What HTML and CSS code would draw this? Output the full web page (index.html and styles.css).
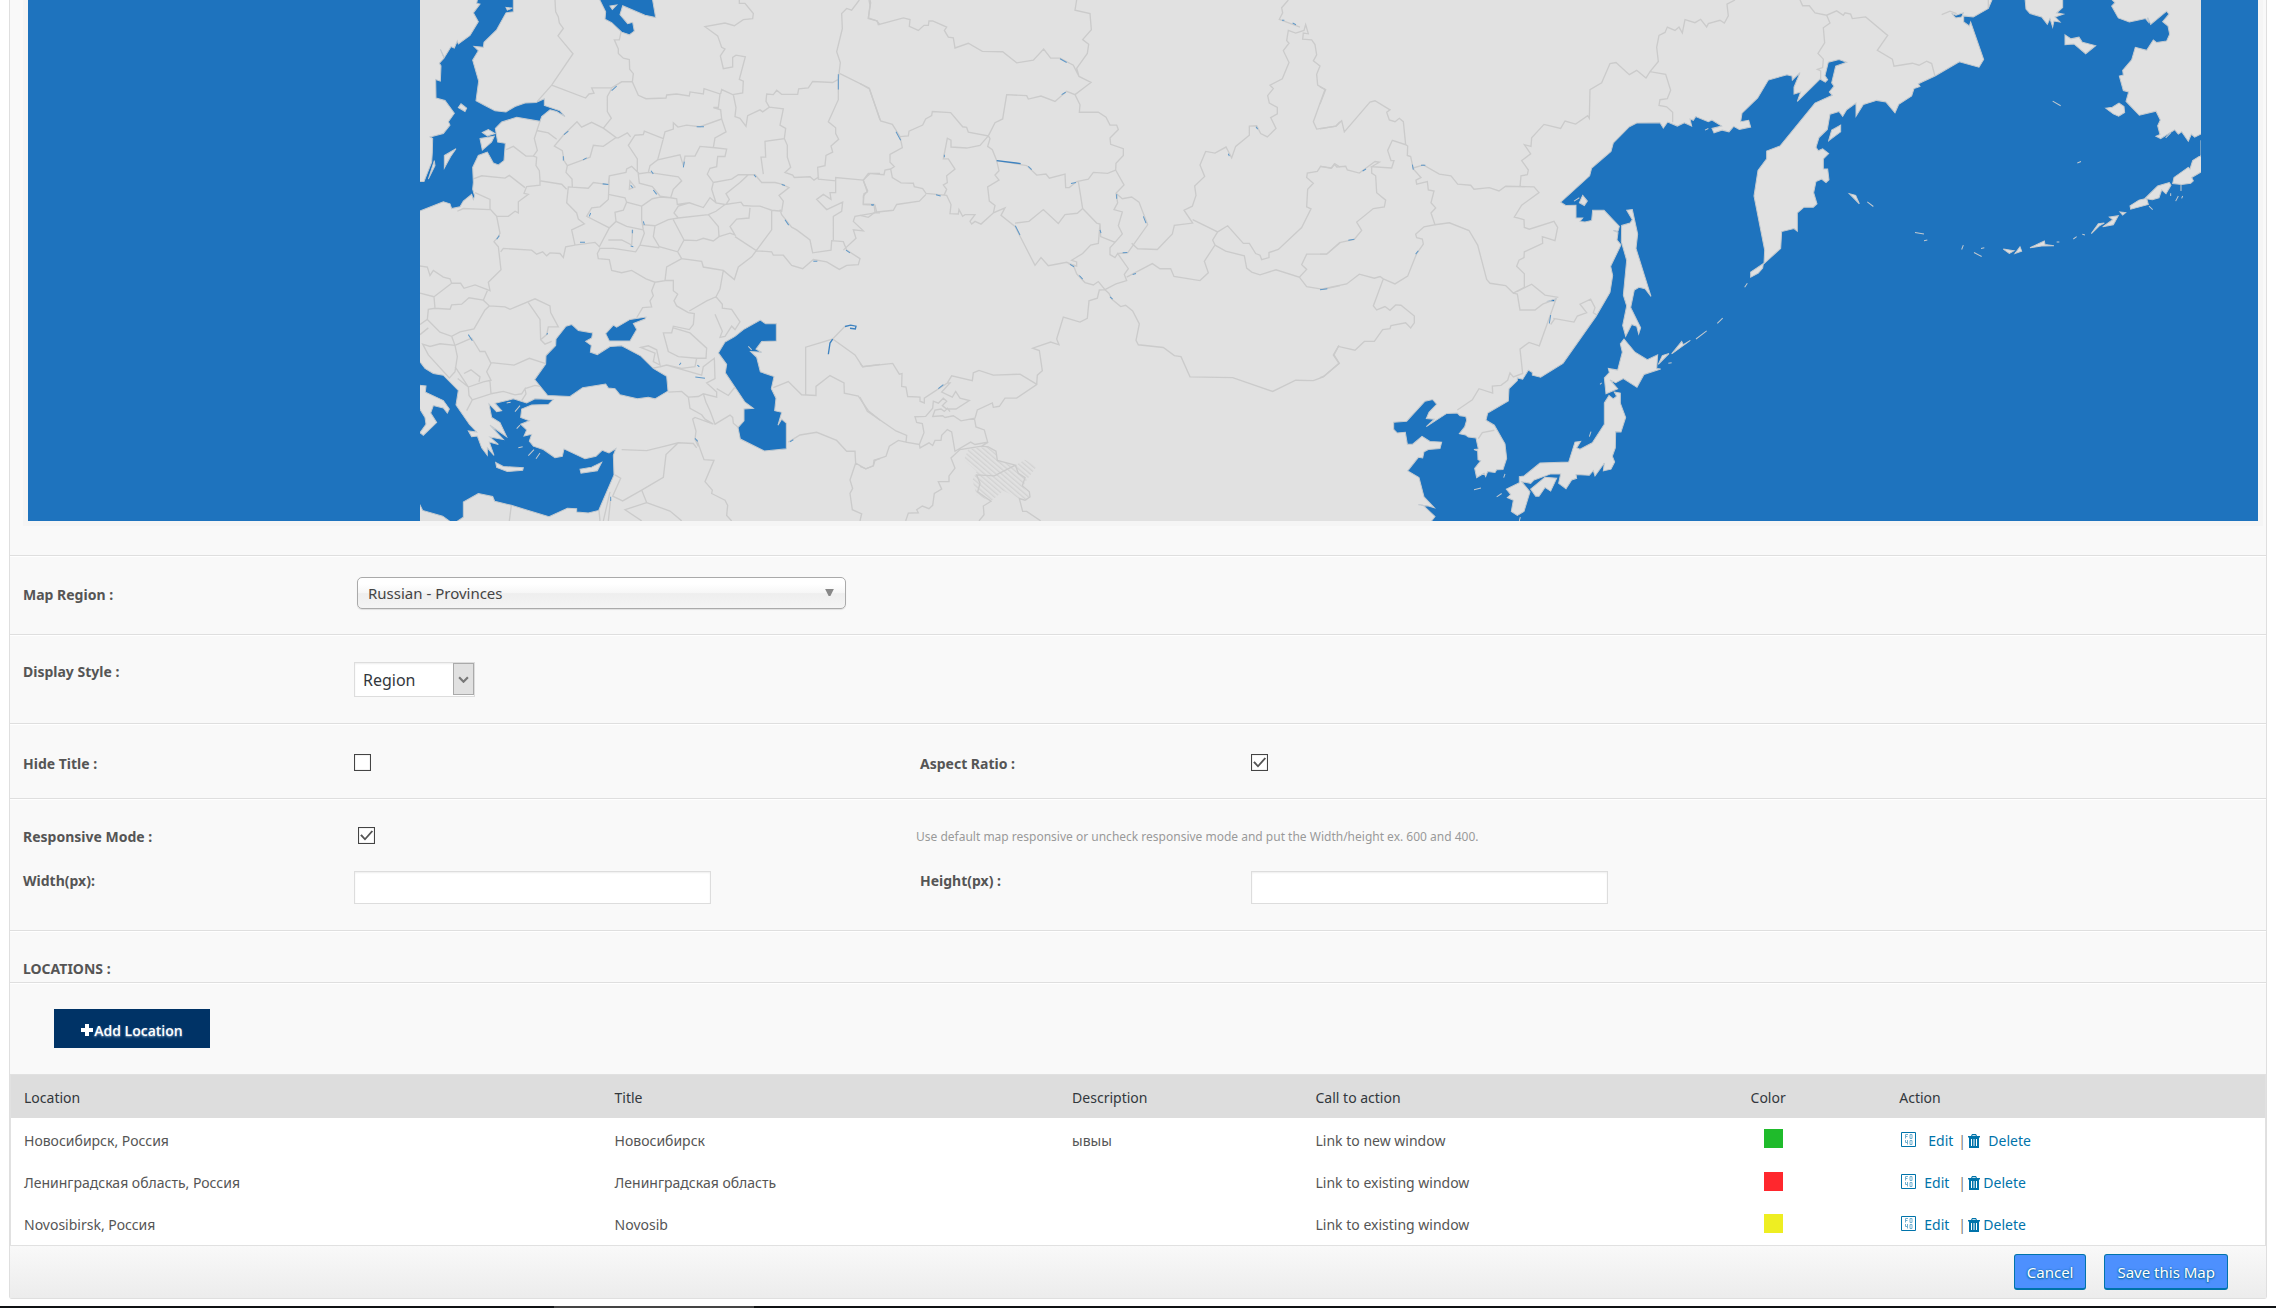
FILE: index.html
```html
<!DOCTYPE html>
<html lang="en">
<head>
<meta charset="utf-8">
<title>Edit Map</title>
<link rel="stylesheet" href="styles.css">
</head>
<body>
<main class="panel">
  <div class="map-frame">
    <svg class="map" viewBox="28 0 2230 521" role="img" aria-label="Map preview">
      <defs>
        <pattern id="hatch" width="11" height="11" patternUnits="userSpaceOnUse" patternTransform="rotate(-50)"><path class="hatch-line" d="M2 0V11"/></pattern>
      </defs>
      <rect class="sea" x="28" y="0" width="2230" height="521"/>
      <rect class="ground" x="420" y="0" width="1781" height="521"/>
      <g transform="translate(400 0) scale(.33333 .33801)">
        <path class="line" d="M465 0L467 35 475 50 478 68 490 84 474 106 519 159 455 252 412 300M455 252L557 290 567 278 582 276 575 260 635 260 665 242 697 242M635 262L622 285 622 330 634 350 610 379 575 362 545 376 531 360 492 398 463 432 487 446 492 475 502 490 498 510 516 530 517 553M663 95L658 118 643 118 655 145 655 158 670 172 688 176 689 205 700 218 697 242 715 282 738 292 798 290 800 281 830 278 868 284 870 272 910 278 912 262 960 278 955 318 940 318 962 325 965 352 900 375 860 370 834 376 820 363 820 382 795 390 790 410 733 388 730 398 705 400 685 430 712 470 712 508M502 490L549 473 570 465 580 430 610 433 648 407 610 379M648 407L655 408 682 393 692 405M790 410L773 473 750 490 745 510 718 514 695 492 680 500 678 510 628 520 625 546 580 540 565 557 505 553 500 600 530 630 535 648 553 662 515 680 525 725 585 717 598 730 628 674M773 473L840 458 850 490 855 462 885 462 900 433 945 437 980 441 975 463 953 463 950 493 930 498 922 515 940 540 995 530 1015 517 1045 517M745 510L835 523 845 535 820 560 812 585 780 580 757 552 718 542 714 508M965 352L978 390 945 408 940 437M962 278L965 265 998 280 1028 275 1030 240 1018 235 1036 168 1008 163 998 170 998 198 970 203 961 165 975 145 965 140 953 106 915 79 975 68 1003 76 1030 58 1058 55 1060 40 1035 10 1018 10 1018 0M1000 280L1008 318 1005 345 1020 350 1038 374 1043 342 1080 325 1088 331 1108 317 1150 322 1140 370 1157 380 1153 410 1095 418 1097 465 1083 465 1090 515M1108 317L1098 300 1100 278 1120 280 1130 267 1145 279 1193 279 1196 263 1225 260 1238 241 1298 244 1315 235 1315 295 1285 360 1307 378 1307 395 1316 412 1293 432 1298 450 1278 460 1275 490 1253 495 1255 530 1307 535 1307 525 1390 533 1410 513 1440 513M1315 235L1321 185 1310 153 1327 85 1325 40 1340 25 1355 30 1378 0M1320 218L1408 261 1440 355M1407 0L1410 15 1405 55 1430 62 1440 73M1153 410L1162 430 1162 465 1172 495 1155 510 1178 518 1183 525 1230 523 1242 533 1257 523M940 540L935 560 948 600 975 605 1023 598 1030 608 1058 610 1080 610 1115 622 1145 625 1150 595 1137 578 1167 555 1145 545 1125 540 1085 540 1065 517 1045 517 1020 540 978 573 988 590 978 605M948 600L930 585 910 614 868 600 832 605 830 588 812 585 780 583 757 588 725 610 725 650 730 680M868 600L835 610 822 630 835 645 925 635 948 625 975 605M725 610L680 598 675 585 625 575M690 535L688 560 705 553ZM725 650L730 680 680 670 648 655 628 674 560 640 575 615 600 612 625 590 628 520M648 655L645 628 670 622 680 598M730 665L765 668 805 650 835 645M765 668L760 700 778 730 833 745 852 710 820 650M852 710L890 712 910 705 940 713 957 700 955 670 925 635M957 700L990 690 1005 695 990 670 1010 648 1047 645 1050 615M730 680L733 690 720 725 707 745 640 735 600 735 592 750 595 765 628 768 635 800 665 807 695 800 738 825 765 835 795 830 800 790 845 765M720 725L778 733M698 680L695 725 665 710 625 710M833 745L845 765 905 773 910 790 940 795 970 800 1003 827 1015 790 1055 760 1115 680 1115 622M1005 700L1070 742 1115 745 1120 755 1150 755 1175 785 1208 795 1240 768 1280 775 1318 797 1340 785 1375 783 1380 765 1340 740 1330 715 1295 712 1293 740 1238 748 1230 710 1190 680 1175 672 1145 635 1140 620M1300 710L1300 640 1325 625 1328 598 1280 620 1250 590 1270 575 1293 590 1290 570 1307 570 1307 530M1330 740L1368 705 1360 680 1390 683 1360 655 1365 640 1425 630 1440 630M1390 535L1403 565 1390 580 1390 605 1425 607 1430 628M795 830L820 830 820 860 833 870 822 890 830 905 865 925 883 928 880 960 868 975 820 965 815 985 790 985 805 1040 835 1055 890 1060M970 800L960 855 948 878 920 890 868 920M948 878L967 900 967 912 995 915 1020 952 1005 975 995 965 975 995 960 998 967 980 945 930M765 835L755 860 760 875 750 890 755 908 728 910 710 940M820 970L870 985 920 1030 918 1060 890 1060 885 1085 845 1090 800 1080 780 1085 755 1090M302 745L310 735 395 740 410 752 428 745 440 757 450 748 480 750 490 762 497 730 525 725M295 700L300 690 290 640 325 640 345 625 355 630 355 597 385 575 372 572 380 552 420 548 420 535 485 545 500 560M218 530L245 520 315 527 328 519 375 555M420 533L418 505 408 490 410 465 400 462 378 462 340 433 318 443M400 462L412 445 403 410 420 358M410 386L445 393 470 412M225 570L270 590 270 618 290 640M172 625L190 617 270 620M295 700L282 715 295 730 303 798 265 835 270 860 225 843 192 853 182 838 155 838 150 825 130 820 100 800 90 815 82 790 60 787M155 838L102 878 105 912 150 915 155 902 185 900 207 881 250 888 268 905 315 908 330 915 405 884 450 905 452 925 475 967 445 967 440 990 422 1005 435 1018 455 1010M60 867L102 878M250 888L262 860M105 912L85 915 82 945 60 960M82 945L120 983 155 995 180 982 222 973 255 917 268 905M385 895L420 945 422 1005M60 990L85 970M68 1018L90 1025 120 1017 165 1022 172 1055 165 1100 148 1118 85 1050ZM155 995L165 1022 215 1000 240 1040 255 1040 273 1075 260 1100 273 1125 250 1130 205 1145 192 1125 165 1085M192 1105L213 1094 240 1115 237 1130M173 1120L205 1145 207 1170 217 1183 200 1215M217 1183L273 1165 270 1128M273 1073L342 1080 388 1060 435 1075M273 1165L310 1158 345 1168 365 1165 375 1150 378 1165 365 1185M375 1150L405 1140 420 1143M722 1028L745 1023 770 1035 780 1080 760 1070 765 1045ZM805 1160L845 1158 865 1175 870 1208 905 1227 915 1240 940 1255 885 1235 878 1240 888 1275 885 1300 895 1320M865 1175L895 1173 910 1165 950 1175 950 1160 920 1133 945 1120 943 1060 910 1085 905 1110 800 1080M950 1150L985 1170 1005 1145M910 1165L918 1190 930 1215 945 1255 990 1228 998 1235 1000 1252 1015 1265M665 1330L740 1333 795 1320 835 1310 880 1312 890 1325M835 1310L798 1345 790 1412 725 1450 668 1482 638 1468 662 1415 645 1405M725 1450L740 1487 675 1508 725 1541M740 1487L810 1512 845 1541M890 1300L912 1360 942 1362 915 1425 937 1450 935 1460 975 1480 983 1495 980 1525 995 1541M1120 1147L1165 1129 1205 1168 1248 1170 1248 1143 1290 1111 1332 1133 1333 1163 1375 1172 1405 1215 1440 1243M1217 1168L1217 1027 1298 1003 1365 1050 1388 1085 1440 1078M1335 965L1298 1003M1165 1308L1200 1287 1250 1279 1310 1303 1340 1335 1365 1335 1367 1370 1350 1420 1358 1445 1350 1460 1357 1508 1385 1520 1380 1541M1367 1370L1397 1387 1420 1378 1425 1362 1440 1357M328 1541L334 1495M600 1541L597 1510M610 1541L630 1455M625 1541L632 1475"/>
        <path class="sea coast" d="M233 -5L230 10 240 12 220 38 235 64 210 105 175 130 172 121 163 142 153 138 133 170 121 146 132 172 118 187 123 195 121 240 107 235 108 290 135 297 163 335 145 360 150 370 130 395 90 405 98 410 97 450 95 480 72 537 58 537 58 625 130 597 150 603 155 617 180 612 190 595 215 575 220 590 224 580 218 560 220 540 218 495 235 460 262 450 280 482 295 488 312 475 316 424 293 420 286 380 305 361 350 347 420 359 425 345 450 325 470 330 495 345 480 328 433 312 433 292 408 303 375 305 345 315 318 331 285 328 255 312 228 298 236 240 218 178 235 150 222 137 250 140 252 125 290 88 318 38 340 35 340 -5Z"/>
        <path class="sea coast" d="M597 -5L617 35 615 57 635 67 665 95 688 103 703 92 698 66 683 70 660 43 668 17 735 45 767 52 757 -5ZM515 960L535 978 578 985 575 1000 557 1010 574 1022 571 1042 592 1049 630 1025 665 1023 722 1053 760 1090 800 1113 804 1157 765 1180 745 1175 712 1180 660 1168 645 1150 625 1148 617 1136 548 1147 510 1173 443 1170 404 1123 437 1077 438 1052 467 1022 468 1003 498 965ZM617 987L640 962 650 968 690 945 738 938 735 944 700 957 710 975 690 1009 628 1009ZM1081 947L1097 958 1129 958 1129 1009 1085 1010 1068 1033 1085 1042 1052 1040 1070 1057 1081 1100 1122 1114 1114 1150 1128 1178 1124 1215 1145 1220 1134 1258 1145 1240 1159 1252 1159 1328 1093 1334 1021 1299 1014 1265 1032 1245 1032 1210 1060 1208 1035 1190 976 1103 980 1078 955 1044 975 1012 1005 995 1030 975Z"/>
        <path class="sea coast" d="M58 1068L75 1090 100 1105 130 1110 175 1155 168 1198 208 1255 230 1278 205 1275 215 1292 232 1290 245 1325 262 1347 262 1325 282 1347 268 1308 295 1315 270 1293 310 1300 270 1258 320 1292 300 1250 275 1235 267 1195 290 1218 305 1215 285 1193 340 1180 380 1192 405 1180 460 1182 445 1197 395 1198 365 1210 362 1235 388 1245 362 1255 380 1272 372 1290 395 1285 388 1305 400 1320 430 1330 465 1354 487 1350 492 1328 555 1357 588 1350 607 1332 627 1340 648 1327 640 1347 642 1405 596 1510 565 1518 530 1515 530 1505 502 1504 447 1529 334 1495 284 1483 278 1469 235 1460 190 1485 190 1530 160 1550 128 1527 68 1510 58 1490Z"/>
        <path class="ground coast" d="M58 1140L78 1142 76 1160 130 1185 148 1210 142 1222 130 1207 100 1200 92 1222 110 1250 70 1288 60 1280 78 1255 75 1235 58 1208ZM287 1368L310 1380 370 1384 368 1391 322 1395 290 1383ZM540 1388L575 1382 605 1368 592 1393 543 1400ZM240 410L283 403 275 420 247 444ZM133 460L168 440 152 463 133 497ZM103 475L105 490 85 530ZM247 392L265 383 285 395 262 402ZM175 318L183 307 200 320 195 330ZM318 22L337 24 322 30ZM630 18L650 15 637 28ZM355 1325L368 1322M385 1348L402 1330M360 1258L350 1268M408 1357L420 1340M345 1218L360 1200M320 1192L332 1190M1045 1025L1055 1035"/>
        <path class="lake" d="M1285 1048L1290 1015 1298 1003M1335 966L1352 962 1368 965 1366 973 1350 971"/>
        <path class="river" d="M1315 220V265M635 268L650 255M492 398L505 388M890 375H912M490 462V475M549 473L560 467M850 495L853 478M753 505L760 515M625 546L608 544M760 562L770 575M692 548L698 555M568 640L572 630M290 708L298 697M540 717H555M697 680V690M692 728L700 730M1062 517L1068 524M1145 546L1155 549M1415 607H1422M1338 740L1350 748M1240 773H1252M1155 650L1166 666M886 1115L915 1119M838 1080L843 1073M892 1080L898 1085M443 985L440 990M885 1297L893 1306M1170 1307L1180 1301M632 1470V1482M205 990L217 1008M730 655L733 665"/>
      </g>
      <g transform="translate(860 0) scale(.33333 .33801)">
        <path class="hatched" d="M312 1360L325 1328 385 1322 408 1335 412 1362 466 1376 495 1360 530 1380 500 1420 488 1440 512 1470 500 1480 478 1475 430 1452 393 1483 350 1465 337 1420 350 1395Z"/>
        <path class="line" d="M30 0L32 8 25 53 52 62 55 73 130 53 150 58 148 78 175 90 192 75 205 75 207 62 218 62 260 80 253 90 265 110 280 112 285 142 325 128 367 152 428 153 470 186 520 178 551 145 572 172 600 172 640 193 657 226 693 244 645 280 620 270 585 300 543 284 505 293 500 283 440 280 428 352 405 363 385 402 325 391 320 377 308 375 272 333 217 330 215 342 197 352 188 370 147 388 145 402 120 404 97 368 62 358 28 263 0 247M650 0L645 30 690 40 694 88 668 117 686 131 682 158 650 202 657 226M645 280L660 310 658 332 715 332 738 347 750 370 770 370 775 383 750 408 752 427 790 440 790 460 768 483 767 503 743 513 700 510 685 530 650 537 628 555 617 555 615 515 568 527 558 515 530 518 500 490 410 475 417 505 405 518 417 533 383 553 388 595 405 608 400 630 363 663 345 655 335 663 330 655 345 635 315 635 308 640 297 620 295 633 270 632 273 605 260 578 198 572 188 558 163 552 160 542 123 541 97 525 92 500 103 493 90 480 90 457 127 437 120 404M385 402L360 430 320 438 273 435 273 415 262 409 250 470 265 470 285 500 260 520 262 540 250 547 260 560 252 578M385 402L390 410 383 433 397 443 410 475M198 575L178 595 110 605 100 622 45 628 25 643 0 637M45 628L42 605 10 603 12 573 22 568 10 533 25 513 72 517 75 503 92 500M400 630L435 615 423 637 465 670 525 785 543 762 565 786 620 776 640 785 650 810 675 836 700 843 715 833 735 857 718 858 712 882 687 890 682 942 660 953 610 938 590 1003 597 1020 572 1012 518 1030 538 1037 547 1097 532 1110 530 1138 470 1178 435 1178 418 1202 400 1205 397 1192 352 1213 345 1237 303 1245 280 1230 255 1235 248 1230 218 1232 225 1213 243 1210 253 1217 262 1208 270 1218M465 660L507 655 550 620 595 661 615 635 652 631 668 617 655 537M668 617L710 660 720 663 722 700 765 717 750 733 750 753 765 762 773 750 805 795 793 812 800 830 768 840 735 857M720 663L715 720 692 725 668 750 635 770 650 775 650 787 625 780M767 503L792 547 768 572 773 600 762 620 787 627 775 668 787 692 765 717M768 572L787 588 815 583 837 598 863 665 803 748 773 750M815 720L833 736 892 738 937 692 943 667 998 660 972 622 997 610 1008 578 1004 550 1034 522 1020 488 1037 448 1065 453 1098 435 1115 467 1127 433 1168 400 1168 373 1190 372 1202 395 1222 405 1248 380 1232 348 1252 337 1252 318 1228 305 1223 283 1240 262 1230 252 1267 233 1287 185 1270 150 1287 128 1280 120 1285 90 1307 98 1332 90 1337 73 1345 100 1330 98 1328 116 1355 118 1365 132 1370 162 1360 180 1380 195 1370 220 1373 252 1395 265 1360 360 1370 382 1428 373 1440 360M1285 0L1265 23 1268 38 1258 57 1320 80M998 650L1073 686 1103 668 1150 720 1168 720 1187 750 1200 755 1205 768 1227 762 1227 747 1255 738 1325 673 1353 618 1340 612 1343 560 1360 542 1340 525 1342 512 1372 507 1382 492 1413 498 1425 485 1440 494M1073 686L1058 710 1065 725 1033 773 1045 807 1020 830 942 818 932 795 900 795 877 780 800 820M1065 725L1097 743 1153 757 1160 793 1175 805 1200 813 1248 798 1318 820 1340 797 1325 783 1340 752 1400 752 1440 717M1318 820L1340 848 1390 856 1440 845M735 857L747 868 755 885 782 907 797 903 818 920 838 958 828 1007 835 1020 910 1028 943 1052 963 1055 990 1115 1118 1117 1238 1158 1307 1125 1360 1126 1390 1115 1437 1075 1420 1050 1437 1022M0 1075L8 1085 98 1075 118 1107 126 1105 125 1143 138 1145 143 1173 180 1175 180 1187 193 1192 193 1178 262 1133 275 1112 337 1126 340 1103 357 1096 400 1110 480 1107 532 1138M262 1133L270 1133 245 1160 277 1175 287 1158 300 1178 328 1185 288 1210 260 1210 247 1200 260 1187 250 1178 235 1193 220 1187 218 1208 197 1232 165 1233 170 1250 187 1253 192 1280 178 1315 138 1308 140 1288 108 1275 22 1217 0 1175M0 1380L18 1387 40 1378 42 1362 78 1350 88 1320 115 1303 138 1308M178 1315L180 1325 207 1310 218 1318 225 1303 243 1303 245 1288 262 1271 275 1278 285 1335 332 1308 345 1315 383 1308 373 1272 348 1263 343 1237M385 1308L365 1320 300 1330 273 1355 285 1385 267 1408 267 1425 235 1425 245 1447 223 1460 218 1495 207 1505 187 1497 170 1508 175 1517 145 1518 137 1541M365 1320L385 1322 408 1335 412 1362 466 1376 403 1408 350 1405 360 1430 353 1455 393 1483 370 1497 372 1523 357 1541M466 1376L475 1400 495 1413 487 1437 508 1455 510 1470 495 1480 478 1475 488 1513 500 1513 542 1541"/>
        <path class="lake" d="M410 475L482 484"/>
        <path class="river" d="M600 174L620 185M108 390L122 415M228 576L242 580M633 543L648 540M466 668L480 695M720 680L723 690M630 782L642 789M658 815L668 826M788 748L802 747M818 812L828 809M1188 375L1193 382M1105 455L1108 462M770 575V588M850 640L858 660M605 280L617 273M33 606H42M253 458V465M235 1150L250 1138M750 878L758 885M1266 60H1273M1298 68L1308 73M505 492L515 502"/>
      </g>
      <g transform="translate(1320 0) scale(.33333 .33801)">
        <path class="line" d="M0 257L17 265 0 308M0 381L48 373 65 357 73 390 150 302 165 298 210 325 200 332 208 355 225 360 238 350 250 360 257 428 217 415 203 445 213 475 222 475 215 497 155 493 178 480 165 478 118 512 82 503 77 492 50 494 43 485 35 497 0 492M155 493L155 512 167 520 170 570 197 592 193 612 160 617 110 657 125 682 103 708 62 717 20 752 0 752M257 428L263 432 262 460 272 463 280 500 303 525 288 533 290 545 322 537 325 562 342 565 333 600 347 615 333 630 345 665 312 671 287 693 290 703 307 707 310 722 290 750 263 817 225 840 190 825 160 905 170 917 195 907 210 918 227 902 243 903 283 935 283 955 272 970 257 955 213 963 210 972 188 975 163 1010 133 1010 105 1036 55 1025 42 1050 58 1075 12 1113 0 1117M0 856L80 840 118 811 163 823 180 818 190 825M280 497L310 488 358 515 393 520 413 545 452 548 462 560 508 555 537 565 557 551 642 553 657 570 605 607 583 642 612 650 613 673 628 678 702 655 713 673 705 712 667 700 668 720 613 745 612 762 597 770 590 788 613 810 613 850 580 867 557 845 510 838 500 827 473 725 447 682 388 659 345 665M600 553L603 520 622 517 625 503 605 475 632 455 613 428 633 433 635 408 672 368 722 380 735 358 767 367 803 342 808 350 810 265 845 245 870 188 888 185 928 221 950 208 978 231 990 212 1037 220 1052 267 1042 292 1020 295 1017 312 1040 316 1058 332 1058 362M990 212L1015 182 1010 140 1017 105 1035 96 1042 80 1065 90 1077 80 1087 97 1095 58 1125 67 1142 57 1160 80 1165 70 1200 60 1213 68 1225 47 1221 12 1245 0M580 867L592 870 600 917 645 917 668 900 708 885 658 1023 627 1013 600 1033 608 1105 580 1115 570 1103 563 1125 543 1140 517 1142 518 1163 477 1150 457 1183 412 1213M592 862L635 841 675 873 715 880M700 942L762 953 772 935 800 925 780 900 812 885 825 910 820 925 830 932M692 960L705 942M475 1298L487 1280 523 1273M1440 0L1448 17 1468 17 1485 38 1520 45 1550 32 1570 45 1575 38 1592 42 1597 55 1637 50 1703 105 1672 149 1717 175 1722 196 1777 187 1797 193 1820 181 1835 188 1845 225M1520 45L1530 68 1510 82 1514 127 1494 158 1510 175 1508 200 1492 205 1502 210V235M2005 -3V25M1865 43L1890 33 1910 40"/>
        <path class="sea coast" d="M320 1560L345 1528 308 1494 295 1493 325 1497 343 1502 312 1470 297 1413 263 1393 295 1353 308 1355 312 1337 325 1330 360 1327 365 1308 330 1306 306 1291 278 1314 262 1314 256 1279 232 1281 221 1270 221 1249 260 1246 315 1187 338 1182 350 1196 327 1220 319 1238 343 1240 319 1262 380 1223 412 1222 420 1230 437 1232 440 1243 434 1263 418 1283 437 1287 445 1293 468 1296 475 1328 462 1330 473 1334 474 1360 482 1363 464 1386 470 1413 492 1400 497 1410 503 1395 525 1398 530 1390 549 1389 560 1356 555 1313 523 1258 498 1243 503 1222 565 1186 567 1150 592 1126 592 1118 608 1122 625 1095 637 1102 637 1110 662 1116 729 1075 828 936 870 865 878 815 872 788 903 724 891 710 894 688 880 682 894 684 898 670 852 622 818 622 815 652 795 657 780 655 788 645 768 645 768 607 737 608 722 598 809 520 815 497 873 448 880 423 928 375 950 364 1020 363 1030 379 1043 361 1072 373 1093 363 1115 373 1110 352 1120 356 1127 345 1165 360 1176 355 1205 373 1176 380 1182 393 1207 385 1227 390 1241 374 1258 383 1292 376 1286 356 1262 360 1266 335 1313 290 1345 237 1401 221 1416 225 1417 237 1440 215 1422 258 1422 278 1442 272 1432 300 1500 234 1516 243 1523 236 1515 224 1525 184 1557 176 1580 184 1547 196 1535 245 1542 255 1528 272 1537 282 1485 305 1380 432 1340 447 1340 470 1314 504 1302 580 1334 740 1332 780 1382 735 1385 685 1422 676 1432 684 1432 630 1452 613 1480 613 1491 603 1481 570 1488 537 1505 530 1518 540 1527 532 1523 500 1510 500 1510 470 1526 454 1508 440 1495 446 1488 436 1497 407 1522 383 1530 338 1557 330 1568 344 1580 325 1608 305 1608 344 1630 309 1670 297 1698 302 1725 334 1736 309 1775 284 1782 262 1800 256 1795 248 1845 225 1918 183 1977 199 1991 176 1952 65 1948 77 1931 65 1931 47 1960 50 2005 25 2018 -5 2115 -5 2118 27 2130 40 2165 50 2182 72 2190 55 2198 80 2202 62 2220 65 2205 50 2230 42 2210 38 2228 22 2228 -5 2372 -5 2385 8 2375 18 2395 53 2428 65 2477 55 2485 65 2483 52 2492 72 2540 33 2547 42 2528 64 2544 77 2549 101 2540 121 2510 126 2500 118 2480 149 2446 140 2435 177 2408 208 2410 222 2398 225 2410 268 2426 272 2418 300 2458 341 2508 329 2521 355 2513 372 2520 398 2508 403 2522 410 2564 384 2575 397 2585 390 2605 418 2614 397 2624 406 2650 393 2650 1560ZM1895 40L1908 45 1930 38 1925 50 1907 53ZM680 892L708 884 703 891Z"/>
        <path class="ground coast" d="M920 622L937 620 953 692 948 735 993 877 975 854 957 850 943 858 932 910 962 970 956 988 950 965 935 960 917 995 908 963 920 905 910 873 920 770 904 715 905 667 930 660 937 650ZM912 1003L945 1042 982 1064 1013 1050 1010 1090 1022 1092 972 1108 951 1146 910 1120 887 1132 870 1124 893 1150 858 1165 853 1118 868 1102 865 1090 893 1095 907 1042 901 1017ZM883 1160L901 1163 901 1193 917 1235 903 1278 887 1277 886 1325 877 1350 884 1367 873 1388 850 1393 853 1370 825 1408 820 1392 808 1406 768 1404 770 1415 755 1420 738 1446 716 1430 722 1402 692 1402 642 1420 632 1430 605 1425 630 1455 612 1513 592 1525 574 1513 580 1480 562 1472 572 1463 559 1447 598 1428 598 1410 612 1408 660 1370 746 1367 765 1308 782 1306 770 1325 780 1329 817 1310 853 1255 853 1192 867 1170 880 1180 890 1172ZM632 1447L675 1412 710 1415 692 1453 675 1442 657 1468 647 1468ZM1292 805L1330 780 1328 793 1315 808 1292 820ZM1055 1047L1085 1010 1090 1020 1111 1007ZM1015 1078L1027 1052 1047 1046ZM788 578L802 595 793 608 778 600ZM1128 1003L1160 979M1192 957L1208 941M1274 850L1282 838M1045 1075L1055 1073M840 1137L845 1133M808 1292L813 1277M462 1449L483 1444M530 1470L545 1460M551 1413L555 1402M598 1541L601 1530M762 595L778 585M1155 385L1165 380M1526 416L1535 385 1562 370V390ZM2235 103L2253 115 2277 110 2287 125 2327 135 2297 159 2262 130 2235 132ZM2357 320L2377 317 2397 305 2412 315 2414 333 2396 344 2380 337ZM1588 573L1607 578 1618 603ZM1642 597L1660 611M2198 299L2222 313M1785 688L1812 692M1812 712L1822 710M1925 738L1930 725M1962 747L1985 759M1983 735L1993 733M2050 737L2082 742 2068 750ZM2085 750L2100 730 2105 743ZM2130 733L2173 713 2175 723 2202 727 2165 728ZM2210 716H2218M2260 707L2270 700M2287 693L2295 695M2272 482L2283 478M2314 691L2335 662 2353 660 2338 668ZM2348 671L2378 650 2368 642 2395 638 2380 665ZM2400 627L2417 629 2408 636ZM2430 609L2457 592 2480 587 2485 605 2432 619ZM2475 587L2513 550 2548 540 2553 548 2538 573 2525 562 2517 585 2497 591ZM2558 543L2562 525 2605 495 2610 500 2618 475 2650 455 2650 505 2615 525 2620 535 2612 542 2585 546ZM2583 546V565M2487 610L2498 620M2552 572V580M2567 595L2575 580M2585 587L2588 580M2537 408L2552 393M2643 415V465"/>
        <path class="river" d="M128 506L138 500M85 711L103 708M277 487L280 502M303 489H316M287 752L295 742M0 857L22 854M688 957L692 932"/>
      </g>
      <rect class="sea" x="2201" y="0" width="57" height="521"/>
      <rect class="sea" x="28" y="0" width="392" height="521"/>
    </svg>
  </div>

  <form>
    <section class="row row-region">
      <label class="name" for="region">Map Region :</label>
      <div class="pick"><select id="region" class="chosen"><option>Russian - Provinces</option></select><svg class="pick-arrow" viewBox="0 0 10 8" aria-hidden="true"><path d="M0 0H10L6 8H4Z"/></svg></div>
    </section>
    <section class="row row-style">
      <label class="name" for="style">Display Style :</label>
      <div class="drop"><select id="style" class="plain"><option>Region</option></select><span class="drop-arrow"><svg viewBox="0 0 10 6" aria-hidden="true"><path d="M1 1L5 5L9 1"/></svg></span></div>
    </section>
    <section class="row row-title">
      <label class="name" for="hide">Hide Title :</label>
      <div class="field"><input type="checkbox" id="hide" class="tick"></div>
      <label class="name" for="aspect">Aspect Ratio :</label>
      <div class="field"><input type="checkbox" id="aspect" class="tick" checked></div>
    </section>
    <section class="row row-size">
      <label class="name" for="responsive">Responsive Mode :</label>
      <div class="field field-inset"><input type="checkbox" id="responsive" class="tick" checked></div>
      <p class="hint">Use default map responsive or uncheck responsive mode and put the Width/height ex. 600 and 400.</p>
      <label class="name" for="width">Width(px):</label>
      <input type="text" id="width" class="box">
      <label class="name" for="height">Height(px) :</label>
      <input type="text" id="height" class="box">
    </section>
    <section class="row row-heading"><h2 class="name">LOCATIONS :</h2></section>
    <section class="row row-add">
      <button type="button" class="add"><svg viewBox="0 0 12 12" aria-hidden="true"><path d="M4 0H8V4H12V8H8V12H4V8H0V4H4Z"/></svg>Add Location</button>
    </section>

    <table class="locations">
      <colgroup><col class="c-location"><col class="c-title"><col class="c-description"><col class="c-call"><col class="c-color"><col></colgroup>
      <thead><tr><th>Location</th><th>Title</th><th>Description</th><th>Call to action</th><th>Color</th><th>Action</th></tr></thead>
      <tbody>
        <tr><td>Новосибирск, Россия</td><td>Новосибирск</td><td>ывыы</td><td>Link to new window</td><td><span class="swatch green"></span></td>
          <td><div class="actions spaced"><a href="#"><svg class="code" viewBox="0 0 15 15" aria-hidden="true"><path d="M.5.5H14.5V14.5H.5Z"/><path class="thin" d="M4.500 6.500V2.500H7M4.500 4.500H6.500M9 2.500H11V6.500H9ZM4.500 8V10.500H7M6.500 8V12.500M9 8.500H11V12.500H9Z"/></svg>Edit</a><span class="bar">|</span><a href="#"><svg class="bin" viewBox="0 0 12 14" aria-hidden="true"><path d="M4 0H8L9 2H12V3.500H11V14H1V3.500H0V2H3ZM4.500 1.200L4.200 2H7.800L7.500 1.200Z"/><path class="slots" d="M3.500 5V12M6 5V12M8.500 5V12"/></svg>Delete</a></div></td></tr>
        <tr><td>Ленинградская область, Россия</td><td>Ленинградская область</td><td></td><td>Link to existing window</td><td><span class="swatch red"></span></td>
          <td><div class="actions"><a href="#"><svg class="code" viewBox="0 0 15 15" aria-hidden="true"><path d="M.5.5H14.5V14.5H.5Z"/><path class="thin" d="M4.500 6.500V2.500H7M4.500 4.500H6.500M9 2.500H11V6.500H9ZM4.500 8V10.500H7M6.500 8V12.500M9 8.500H11V12.500H9Z"/></svg>Edit</a><span class="bar">|</span><a href="#"><svg class="bin" viewBox="0 0 12 14" aria-hidden="true"><path d="M4 0H8L9 2H12V3.500H11V14H1V3.500H0V2H3ZM4.500 1.200L4.200 2H7.800L7.500 1.200Z"/><path class="slots" d="M3.500 5V12M6 5V12M8.500 5V12"/></svg>Delete</a></div></td></tr>
        <tr><td>Novosibirsk, Россия</td><td>Novosib</td><td></td><td>Link to existing window</td><td><span class="swatch yellow"></span></td>
          <td><div class="actions"><a href="#"><svg class="code" viewBox="0 0 15 15" aria-hidden="true"><path d="M.5.5H14.5V14.5H.5Z"/><path class="thin" d="M4.500 6.500V2.500H7M4.500 4.500H6.500M9 2.500H11V6.500H9ZM4.500 8V10.500H7M6.500 8V12.500M9 8.500H11V12.500H9Z"/></svg>Edit</a><span class="bar">|</span><a href="#"><svg class="bin" viewBox="0 0 12 14" aria-hidden="true"><path d="M4 0H8L9 2H12V3.500H11V14H1V3.500H0V2H3ZM4.500 1.200L4.200 2H7.800L7.500 1.200Z"/><path class="slots" d="M3.500 5V12M6 5V12M8.500 5V12"/></svg>Delete</a></div></td></tr>
      </tbody>
    </table>

    <div class="submit">
      <button type="button" class="primary">Cancel</button>
      <button type="submit" class="primary">Save this Map</button>
    </div>
  </form>
</main>
<footer class="taskbar"><span class="task"></span></footer>
</body>
</html>
```
FILE: styles.css
```css
* { box-sizing: border-box; }

body {
  margin: 0;
  background: #fff;
  color: #555;
  font: 14px/20px "Noto Sans", "Open Sans", sans-serif;
}

.panel {
  margin: 0 9px 7px;
  background: #f9f9f9;
  border: 1px solid #dfdfdf;
  border-top: 0;
  border-radius: 0 0 3px 3px;
}

/* Map preview */
.map-frame {
  margin: 0 3px 29px 13px;
  border: 5px solid #f5f5f5;
  border-top: 0;
}
.map { display: block; width: 100%; height: auto; }
.sea { fill: #1e73be; }
.ground { fill: #e1e1e1; }
.coast { stroke: #c4cacf; stroke-width: 3; }
.line { fill: none; stroke: #cbcbcb; stroke-width: 4; }
.lake { fill: none; stroke: #3d82c0; stroke-width: 4; }
.river { fill: none; stroke: #5f98c8; stroke-width: 3; }
.hatch-line { fill: none; stroke: #d2d2d2; stroke-width: 4; }
.hatched { fill: url(#hatch); }

/* Form rows */
.row {
  display: grid;
  grid-template-columns: 331fr 566fr 331fr 1002fr;
  align-items: start;
  padding: 0 13px;
  border-top: 1px solid #dfdfdf;
  box-shadow: inset 0 1px #fff;
}
.name {
  margin: 0;
  color: #555;
  font-size: 14px;
  line-height: 20px;
  font-weight: 700;
}
.field { display: flex; }
.field-inset { padding-left: 4px; }

.row-region { padding-top: 21px; padding-bottom: 25px; }
.row-region .name { padding-top: 8px; }
.row-style { padding-top: 27px; padding-bottom: 26px; }
.row-title { padding-top: 30px; padding-bottom: 24px; }
.row-size { padding-top: 28px; padding-bottom: 26px; row-gap: 24px; }
.row-heading { padding-top: 28px; padding-bottom: 3px; }
.row-add { padding: 26px 44px; }

.hint {
  grid-column: 3 / 5;
  margin: 0 0 0 -4px;
  color: #999;
  font-size: 12px;
  line-height: 20px;
}

.pick { position: relative; width: 489px; margin-left: 3px; }
.chosen {
  display: block;
  width: 100%;
  height: 32px;
  padding: 0 10px;
  appearance: none;
  border: 1px solid #aaa;
  border-radius: 5px;
  background: linear-gradient(#fff 20%, #f6f6f6 50%, #eee 52%, #f4f4f4);
  box-shadow: 0 1px 1px rgba(0, 0, 0, .1);
  color: #444;
  font: 15px "Noto Sans", sans-serif;
}
.pick-arrow {
  position: absolute;
  top: 12px;
  right: 12px;
  width: 9px;
  height: 7px;
  fill: #888;
  pointer-events: none;
}

.drop { position: relative; width: 121px; }
.plain {
  display: block;
  width: 100%;
  height: 35px;
  padding: 0 8px;
  appearance: none;
  border: 1px solid #ddd;
  border-radius: 0;
  background: #fff;
  box-shadow: inset 0 1px 2px rgba(0, 0, 0, .07);
  color: #32373c;
  font: 16px "Noto Sans", sans-serif;
}
.drop-arrow {
  position: absolute;
  top: 1px;
  right: 1px;
  display: grid;
  place-items: center;
  width: 21px;
  height: 32px;
  border: 1px solid #aaa;
  background: #e1e1e1;
  pointer-events: none;
}
.drop-arrow svg { width: 11px; height: 7px; fill: none; stroke: #777; stroke-width: 2; }

.tick {
  width: 17px;
  height: 17px;
  margin: 0;
  appearance: none;
  border: 1px solid #444;
  background: #fff;
  box-shadow: inset 0 0 1px #888;
}
.tick:checked::before {
  content: "";
  display: block;
  width: 15px;
  height: 15px;
  background: #555;
  clip-path: polygon(8% 50%, 18% 42%, 40% 66%, 84% 16%, 94% 24%, 40% 84%);
}

.box {
  width: 357px;
  height: 33px;
  padding: 3px 5px;
  border: 1px solid #ddd;
  background: #fff;
  box-shadow: inset 0 1px 2px rgba(0, 0, 0, .07);
  font: 14px "Noto Sans", sans-serif;
}

.add {
  display: flex;
  align-items: center;
  justify-content: center;
  justify-self: start;
  width: 156px;
  height: 39px;
  padding: 3px 0 0;
  border: 0;
  background: #003366;
  color: #fff;
  font: 600 14px "Open Sans", sans-serif;
  text-shadow: 0 1px 2px #7fa0c0;
  white-space: nowrap;
}
.add svg { width: 12px; height: 12px; margin-right: 1px; fill: #fff; }

/* Locations */
.locations {
  width: 100%;
  table-layout: fixed;
  border-collapse: separate;
  border-spacing: 0;
  border: 1px solid #e1e1e1;
  background: #fff;
}
.c-location { width: 26.2%; }
.c-title { width: 20.3%; }
.c-description { width: 10.8%; }
.c-call { width: 19.3%; }
.c-color { width: 6.6%; }
.locations th {
  height: 43px;
  padding: 3px 0 0 13px;
  background: #ddd;
  color: #32373c;
  font-weight: 400;
  text-align: left;
}
.locations td { height: 42px; padding: 2px 0 0 13px; }
.locations tbody tr:first-child td { height: 43px; }
.swatch { display: block; width: 19px; height: 19px; margin: -4px 0 0 13px; }
.green { background: #1fbb2b; }
.red { background: #ff272d; }
.yellow { background: #eeee22; }

.actions { display: flex; gap: 8px; }
.actions a { display: flex; align-items: center; gap: 3px; color: #0073aa; text-decoration: none; }
.actions a:first-child { width: 53px; gap: 8px; margin-left: 2px; }
.spaced a { gap: 8px; }
.spaced a:first-child { gap: 12px; }
.bar { width: 3px; margin: 0 -1px 0 -4px; color: #777; }
.code { width: 15px; height: 15px; margin-top: -3px; fill: none; stroke: #0073aa; }
.code .thin { stroke: #6fb0d0; }
.bin { width: 12px; height: 14px; fill: #0073aa; fill-rule: evenodd; }
.bin .slots { fill: none; stroke: #fff; }

.submit {
  display: flex;
  justify-content: flex-end;
  gap: 18px;
  padding: 8px 38px 8px;
  background: linear-gradient(#f9f9f9, #ececec);
}
.primary {
  height: 36px;
  padding: 0 12px;
  border: 1px solid #0073aa;
  border-bottom-width: 2px;
  border-radius: 3px;
  background: #4d90fe;
  color: #fff;
  font: 15px "Noto Sans", sans-serif;
  text-shadow: 0 1px 2px #006799, 0 0 2px #006799;
}

.taskbar { display: flex; height: 2px; background: #101214; }
.task { width: 200px; margin-left: 554px; background: #444; }
```
